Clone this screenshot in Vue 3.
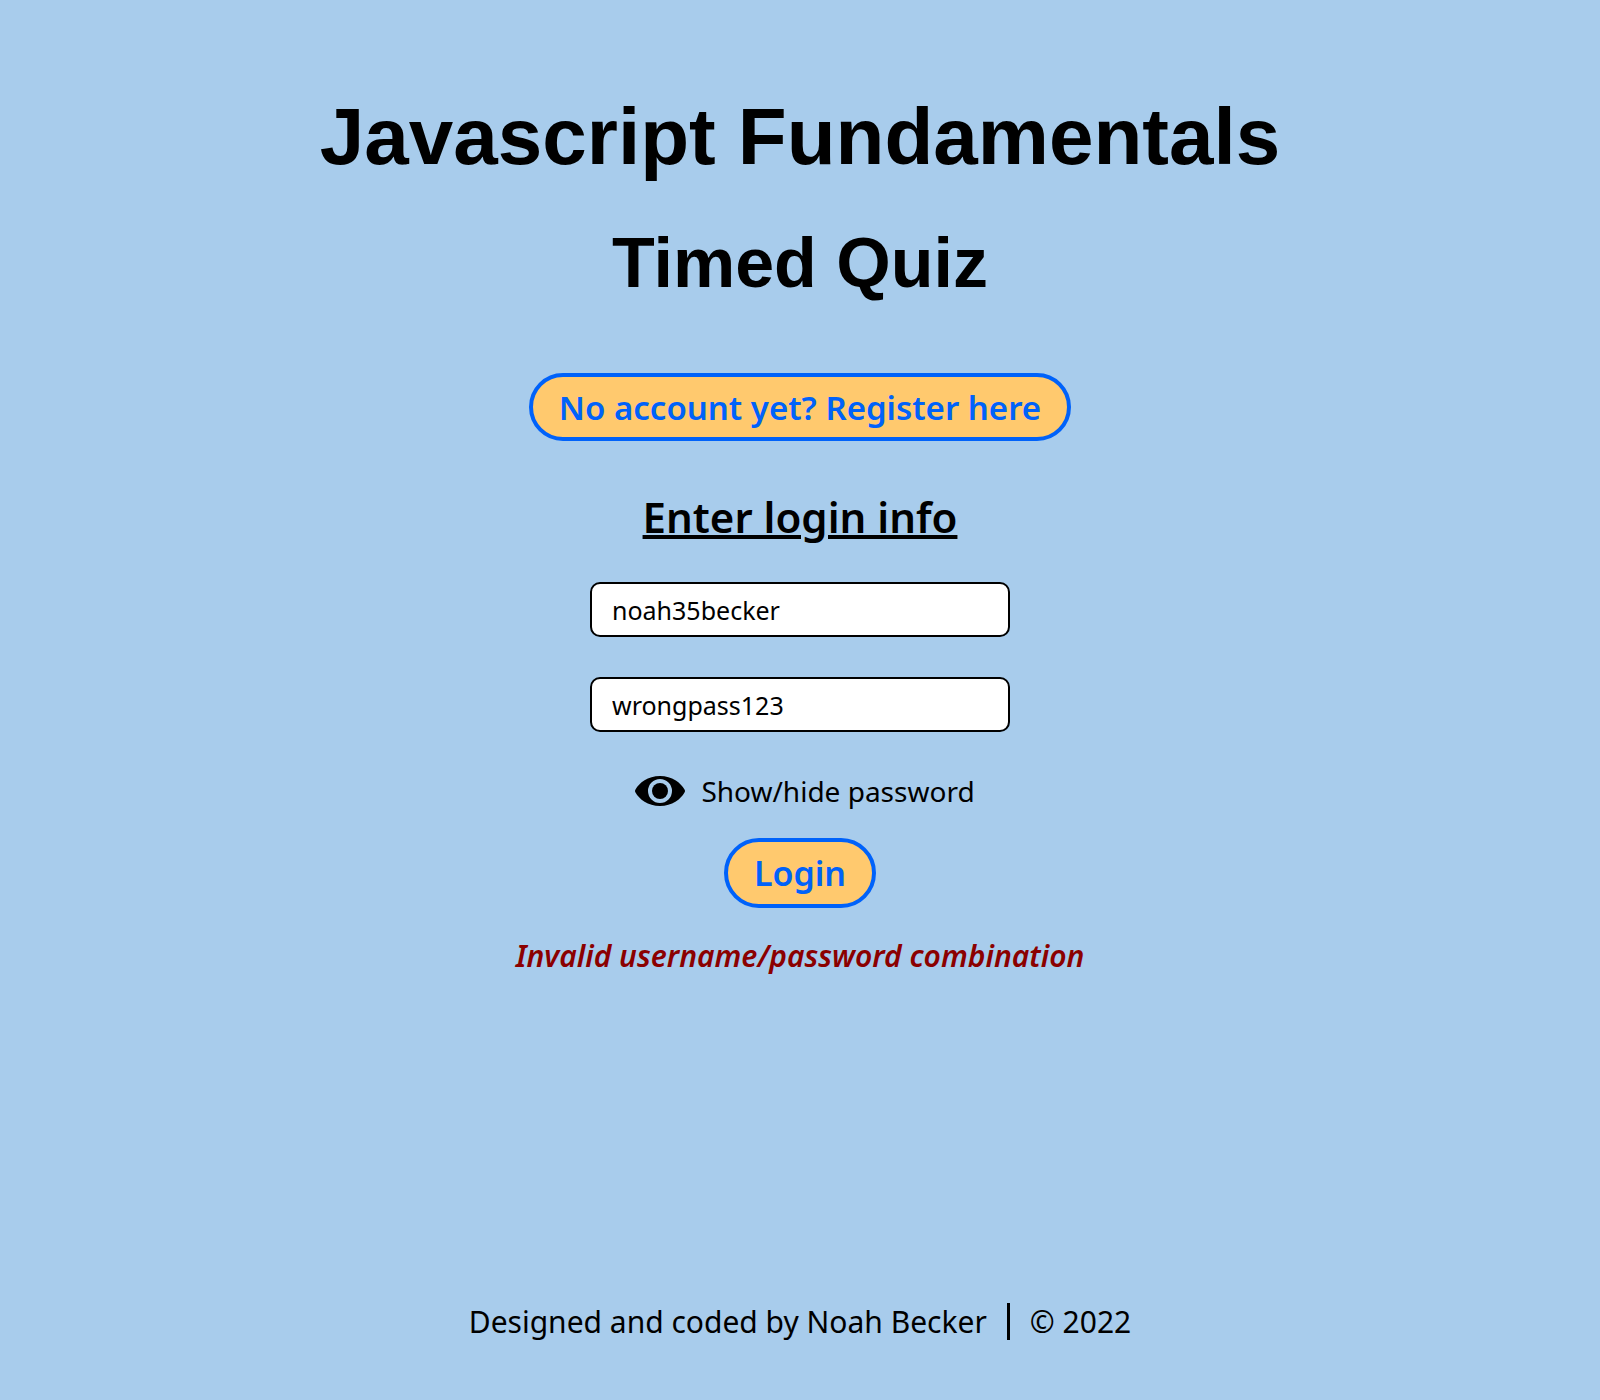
<script setup>
import { ref } from 'vue'

const username = ref('noah35becker')
const password = ref('wrongpass123')
const visible = ref(true)
</script>

<template>
  <div class="page">
    <header>
      <h1>Javascript Fundamentals</h1>
      <p class="subtitle">Timed Quiz</p>
    </header>
    <main>
      <a class="pill register" href="#register">No account yet? Register here</a>
      <h2>Enter login info</h2>
      <form @submit.prevent>
        <input v-model="username" type="text" aria-label="Username" />
        <input v-model="password" :type="visible ? 'text' : 'password'" aria-label="Password" />
        <button class="toggle" type="button" @click="visible = !visible">
          <svg viewBox="0 0 50 30" aria-hidden="true">
            <path fill-rule="evenodd" d="M25 0C37 0 46 7 49.500 13.500Q50.500 15 49.500 16.500C46 23 37 30 25 30S4 23 0.500 16.500Q-0.500 15 0.500 13.500C4 7 13 0 25 0ZM25 3a12 12 0 1 0 0 24a12 12 0 0 0 0-24Z" />
            <circle cx="25" cy="15" r="8" />
          </svg>
          <span>Show/hide password</span>
        </button>
        <button class="pill login" type="submit">Login</button>
        <p class="error" role="alert">Invalid username/password combination</p>
      </form>
    </main>
    <footer>
      <span>Designed and coded by Noah Becker</span>
      <span class="copyright">© 2022</span>
    </footer>
  </div>
</template>

<style>
body {
  background: #a8ccec;
}
</style>

<style scoped>
* {
  box-sizing: border-box;
}

.page {
  min-height: 100vh;
  display: flex;
  flex-direction: column;
  align-items: center;
  padding: 89px 24px 60px;
  background: #a8ccec;
  color: #000;
  font-family: "Trebuchet MS", "Noto Sans", sans-serif;
  text-align: center;
}

h1,
h2,
p {
  margin: 0;
}

h1,
.subtitle {
  font-family: "Liberation Sans", sans-serif;
  font-weight: 700;
}

h1 {
  font-size: 80px;
  line-height: 96px;
}

.subtitle {
  margin-top: 36px;
  font-size: 70px;
  line-height: 84px;
}

main,
form {
  display: flex;
  flex-direction: column;
  align-items: center;
}

.pill {
  display: flex;
  align-items: center;
  justify-content: center;
  height: 68px;
  padding: 0 26px;
  border: 4px solid #0062fa;
  border-radius: 35px;
  background: #ffc96e;
  color: #0062fa;
  font-family: inherit;
  font-weight: 600;
  text-decoration: none;
}

.register {
  margin-top: 68px;
  font-size: 33px;
}

h2 {
  margin-top: 48px;
  font-size: 42px;
  font-weight: 600;
  line-height: 56px;
  text-decoration: underline;
  text-decoration-thickness: 4px;
}

input {
  width: 420px;
  height: 55px;
  padding: 0 20px;
  border: 2px solid #000;
  border-radius: 10px;
  background: #fff;
  color: #000;
  font-family: inherit;
  font-size: 25px;
}

form {
  margin-top: 37px;
}

input + input {
  margin-top: 40px;
}

.toggle {
  display: flex;
  align-items: center;
  gap: 16px;
  height: 38px;
  margin-top: 40px;
  padding: 0 0 0 10px;
  border: 0;
  background: none;
  color: #000;
  font-family: inherit;
  font-size: 28px;
}

.toggle svg {
  width: 50px;
  height: 30px;
}

.login {
  height: 70px;
  margin-top: 28px;
  font-size: 34px;
}

.error {
  margin-top: 28px;
  color: #8b0000;
  font-size: 30px;
  font-style: italic;
  font-weight: 600;
  line-height: 40px;
}

footer {
  display: flex;
  align-items: center;
  margin-top: auto;
  font-size: 30px;
  line-height: 37px;
}

.copyright {
  margin-left: 20px;
  padding-left: 20px;
  border-left: 3px solid #000;
}
</style>
